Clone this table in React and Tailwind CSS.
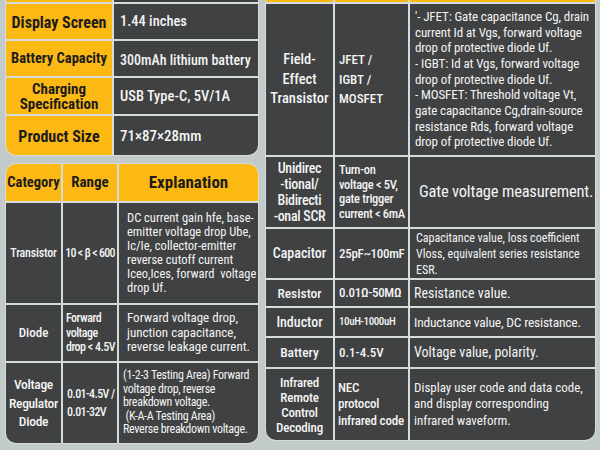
import React from 'react';

const Y = 'bg-[#fdb913]';
const D = 'bg-[#3f4142]';

const specs = [
  { k: 'Display Screen', v: '1.44 inches', h: 'h-[35px]', ks: 'text-[16px]', vs: 'text-[14.5px]' },
  { k: 'Battery Capacity', v: '300mAh lithium battery', h: 'h-[35px]', ks: 'text-[14.5px]', vs: 'text-[14px]' },
  { k: 'Charging\nSpecification', v: 'USB Type-C, 5V/1A', h: 'h-[36px]', ks: 'text-[15px] leading-[17px]', vs: 'text-[14.5px]' },
  { k: 'Product Size', v: '71×87×28mm', h: 'h-[39px]', ks: 'text-[16px]', vs: 'text-[15px]' },
];

const App = () => {
  return (
    <div className="w-[600px] h-[450px] overflow-hidden bg-[#c3cbca] flex whitespace-nowrap font-['Roboto_Condensed',Roboto,sans-serif]">

      {/* Left column */}
      <div className="pl-[5px] w-[259px] flex flex-col gap-[7px]">

        {/* Specs (cut at top) */}
        <div className="border border-t-0 border-[#d6dbdb] rounded-b-[11px] overflow-hidden bg-[#d6dbdb] grid grid-cols-[106px_144px] gap-[2px]">
          <div className={`h-[2px] ${Y}`} />
          <div className={`h-[2px] ${D}`} />
          {specs.map(s => (
            <React.Fragment key={s.k}>
              <div className={`${s.h} ${Y} flex items-center justify-center pt-[2px] text-center whitespace-pre-line font-bold leading-none text-[#1c1c1c] ${s.ks}`}>
                {s.k}
              </div>
              <div className={`${s.h} ${D} flex items-center pl-[6px] pt-[2px] font-medium text-[#f4f4f4] leading-none ${s.vs}`}>
                {s.v}
              </div>
            </React.Fragment>
          ))}
        </div>

        {/* Component table, left part */}
        <div className="border border-[#d6dbdb] rounded-[11px] overflow-hidden bg-[#d6dbdb] grid grid-cols-[55px_54px_139px] gap-[2px] text-[#f4f4f4]">
          <div className={`h-[37px] ${Y} flex items-center justify-center font-bold text-[14.5px] text-[#1c1c1c]`}>Category</div>
          <div className={`${Y} flex items-center justify-center font-bold text-[15px] text-[#1c1c1c]`}>Range</div>
          <div className={`${Y} flex items-center justify-center font-bold text-[17px] text-[#1c1c1c]`}>Explanation</div>

          <div className={`h-[100px] ${D} flex items-center justify-center font-medium text-[12px] tracking-[-0.2px]`}>Transistor</div>
          <div className={`${D} flex items-center justify-center font-medium text-[12px] tracking-[-0.7px]`}>10 &lt; β &lt; 600</div>
          <div className={`${D} flex items-center pl-[8px] text-[12.5px] leading-[14px]`}>
            <div>
              DC current gain hfe, base-<br />
              emitter voltage drop Ube,<br />
              Ic/Ie, collector-emitter<br />
              reverse cutoff current<br />
              Iceo,Ices, forward&nbsp; voltage<br />
              drop Uf.
            </div>
          </div>

          <div className={`h-[56px] ${D} flex items-center justify-center font-medium text-[13px]`}>Diode</div>
          <div className={`${D} flex items-center pl-[3px] font-medium text-[12px] tracking-[-0.5px] leading-[14.5px]`}>
            <div>Forward<br />voltage<br />drop &lt; 4.5V</div>
          </div>
          <div className={`${D} flex items-center pl-[8px] text-[13px] leading-[14.5px]`}>
            <div>Forward voltage drop,<br />junction capacitance,<br />reverse leakage current.</div>
          </div>

          <div className={`h-[80px] ${D} flex items-center justify-center text-center font-medium text-[13.5px] tracking-[-0.3px] leading-[18.5px]`}>
            <div>Voltage<br />Regulator<br />Diode</div>
          </div>
          <div className={`${D} flex items-center pl-[4px] font-medium text-[12px] tracking-[-0.6px] leading-[18px]`}>
            <div>0.01-4.5V /<br />0.01-32V</div>
          </div>
          <div className={`${D} flex items-center pl-[4px] text-[12px] leading-[13.5px] tracking-[-0.3px]`}>
            <div>
              (1-2-3 Testing Area) Forward<br />
              voltage drop, reverse<br />
              breakdown voltage.<br />
              &nbsp;(K-A-A Testing Area)<br />
              Reverse breakdown voltage.
            </div>
          </div>
        </div>
      </div>

      {/* Right column: component table continued (cut at top) */}
      <div className="ml-[6px] w-[331px]">
        <div className="border border-t-0 border-[#d6dbdb] rounded-b-[11px] overflow-hidden bg-[#d6dbdb] grid grid-cols-[67px_73px_185px] gap-[2px] text-[#f4f4f4]">
          <div className={`h-[2px] ${Y}`} />
          <div className={`h-[2px] ${Y}`} />
          <div className={`h-[2px] ${Y}`} />

          <div className={`h-[151px] ${D} flex items-center justify-center text-center font-medium text-[14.5px] leading-[19.5px]`}>
            <div>Field-<br />Effect<br />Transistor</div>
          </div>
          <div className={`${D} flex items-center pl-[4px] font-medium text-[13px] leading-[19.5px]`}>
            <div>JFET /<br />IGBT /<br />MOSFET</div>
          </div>
          <div className={`${D} flex items-center pl-[5px] text-[13px] tracking-[-0.1px] leading-[15.7px]`}>
            <div>
              '- JFET: Gate capacitance Cg, drain<br />
              current Id at Vgs, forward voltage<br />
              drop of protective diode Uf.<br />
              - IGBT: Id at Vgs, forward voltage<br />
              drop of protective diode Uf.<br />
              - MOSFET: Threshold voltage Vt,<br />
              gate capacitance Cg,drain-source<br />
              resistance Rds, forward voltage<br />
              drop of protective diode Uf.
            </div>
          </div>

          <div className={`h-[70px] ${D} flex items-center justify-center text-center font-medium text-[14px] tracking-[-0.3px] leading-[16px]`}>
            <div>Unidirec<br />-tional/<br />Bidirecti<br />-onal SCR</div>
          </div>
          <div className={`${D} flex items-center pl-[4px] font-medium text-[12.5px] tracking-[-0.3px] leading-[14.5px]`}>
            <div>Turn-on<br />voltage &lt; 5V,<br />gate trigger<br />current &lt; 6mA</div>
          </div>
          <div className={`${D} flex items-center pl-[9px] text-[16.5px] tracking-[-0.2px]`}>Gate voltage measurement.</div>

          <div className={`h-[49px] ${D} flex items-center justify-center font-medium text-[14px]`}>Capacitor</div>
          <div className={`${D} flex items-center pl-[4px] font-medium text-[13px] tracking-[-0.3px]`}>25pF~100mF</div>
          <div className={`${D} flex items-center pl-[6px] text-[12px] leading-[16px]`}>
            <div>Capacitance value, loss coefficient<br />Vloss, equivalent series resistance<br />ESR.</div>
          </div>

          <div className={`h-[26px] ${D} flex items-center justify-center font-medium text-[13.5px]`}>Resistor</div>
          <div className={`${D} flex items-center pl-[4px] font-medium text-[13px] tracking-[-0.3px]`}>0.01Ω-50MΩ</div>
          <div className={`${D} flex items-center pl-[4px] text-[14px]`}>Resistance value.</div>

          <div className={`h-[28px] ${D} flex items-center justify-center font-medium text-[14px]`}>Inductor</div>
          <div className={`${D} flex items-center pl-[4px] font-medium text-[11px] tracking-[-0.4px]`}>10uH-1000uH</div>
          <div className={`${D} flex items-center pl-[4px] text-[13.5px] tracking-[-0.2px]`}>Inductance value, DC resistance.</div>

          <div className={`h-[29px] ${D} flex items-center justify-center font-medium text-[13.5px]`}>Battery</div>
          <div className={`${D} flex items-center pl-[4px] font-medium text-[13px]`}>0.1-4.5V</div>
          <div className={`${D} flex items-center pl-[4px] text-[14px]`}>Voltage value, polarity.</div>

          <div className={`h-[71px] ${D} flex items-center justify-center text-center font-medium text-[13px] tracking-[-0.2px] leading-[15px]`}>
            <div>Infrared<br />Remote<br />Control<br />Decoding</div>
          </div>
          <div className={`${D} flex items-center pl-[3px] font-medium text-[13px] tracking-[-0.2px] leading-[16.5px]`}>
            <div>NEC<br />protocol<br />infrared code</div>
          </div>
          <div className={`${D} flex items-center pl-[4px] text-[13px] leading-[16.5px]`}>
            <div>Display user code and data code,<br />and display corresponding<br />infrared waveform.</div>
          </div>
        </div>
      </div>

    </div>
  );
};

export default App;
